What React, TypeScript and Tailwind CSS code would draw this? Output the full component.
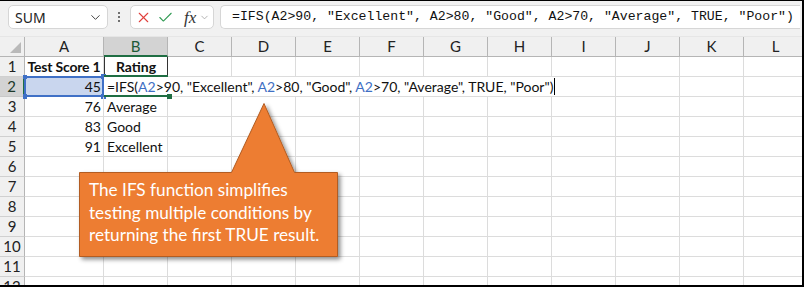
import { ChevronDown, X, Check } from 'lucide-react';

const cols = ['A', 'B', 'C', 'D', 'E', 'F', 'G', 'H', 'I', 'J', 'K', 'L'];
const widths = [79, 64, 64, 64, 64, 64, 64, 64, 64, 64, 64, 64];

const cellFont = { fontFamily: 'Lato, "Liberation Sans", sans-serif' };

function FormulaText() {
  return (
    <span>
      =IFS(<span className="text-[#3f6fc4]">A2</span>&gt;90, "Excellent", <span className="text-[#3f6fc4]">A2</span>&gt;80, "Good",{' '}
      <span className="text-[#3f6fc4]">A2</span>&gt;70, "Average", TRUE, "Poor")
    </span>
  );
}

function Cell({ row, col }: { row: number; col: number }) {
  const w = widths[col];
  const base =
    'relative h-[20px] shrink-0 whitespace-nowrap border-r border-b border-[#dcdcdc] text-[14px] leading-[19px] text-[#111]';

  // A column values
  if (col === 0) {
    const vals: Record<number, string> = { 2: '45', 3: '76', 4: '83', 5: '91' };
    if (row === 1)
      return (
        <div className={`${base} text-center font-bold tracking-[-0.2px]`} style={{ width: w }}>
          Test Score 1
        </div>
      );
    if (row === 2)
      return (
        <div className={`${base} bg-[#c9d6ee] text-right pr-[2px]`} style={{ width: w }}>
          45
          <div className="pointer-events-none absolute inset-[-1px] border-2 border-[#3f70c6]" />
          <div className="absolute -left-[2px] -top-[2px] h-[4px] w-[4px] bg-[#3f70c6]" />
          <div className="absolute -right-[3px] -top-[3px] h-[5px] w-[5px] bg-[#3f70c6]" />
          <div className="absolute -left-[2px] -bottom-[3px] h-[5px] w-[4px] bg-[#3f70c6]" />
          <div className="absolute -right-[3px] -bottom-[3px] h-[5px] w-[5px] bg-[#3f70c6]" />
        </div>
      );
    return (
      <div className={`${base} text-right pr-[2px]`} style={{ width: w }}>
        {vals[row] ?? ''}
      </div>
    );
  }

  if (col === 1) {
    const vals: Record<number, string> = { 3: 'Average', 4: 'Good', 5: 'Excellent' };
    if (row === 1)
      return (
        <div className={`${base} border-x border-x-[#333] text-center font-bold`} style={{ width: w }}>
          Rating
        </div>
      );
    if (row === 2)
      return (
        <div className={`${base} z-10`} style={{ width: w }}>
          <div className="absolute left-0 top-0 flex h-[19px] items-center whitespace-nowrap bg-white pl-[3px] pr-[1px]">
            <FormulaText />
            <span className="ml-[1px] inline-block h-[17px] w-[1px] bg-black" />
          </div>
          <div className="absolute -top-[2px] left-0 h-[2px] w-[64px] bg-[#1f6e43]" />
          <div className="absolute -bottom-[1px] left-0 h-[2px] w-[64px] bg-[#1f6e43]" />
          <div className="absolute -bottom-[3px] left-[63px] h-[5px] w-[5px] bg-[#1f6e43]" />
        </div>
      );
    return (
      <div className={`${base} pl-[3px]`} style={{ width: w }}>
        {vals[row] ?? ''}
      </div>
    );
  }

  return <div className={base} style={{ width: w }} />;
}

export default function App() {
  const rows = Array.from({ length: 12 }, (_, i) => i + 1);

  return (
    <div className="relative h-[287px] w-[804px] overflow-hidden border-t border-r-2 border-b-2 border-black bg-white">
      {/* Formula bar */}
      <div
        className="flex h-[35px] items-start gap-0 bg-[#f1f1f1] pl-[8px] pt-[4px]"
        style={{ fontFamily: '"Noto Sans", "Open Sans", sans-serif' }}
      >
        <div className="flex h-[24px] w-[100px] items-center justify-between rounded-[5px] border border-[#d6d6d6] bg-white pl-[6px] pr-[4px] text-[14px] text-[#222]">
          <span>SUM</span>
          <ChevronDown size={15} strokeWidth={1.6} className="text-[#444]" />
        </div>
        <div className="flex h-[24px] w-[22px] flex-col items-center justify-center gap-[2px]">
          <span className="h-[2px] w-[2px] rounded-full bg-[#444]" />
          <span className="h-[2px] w-[2px] rounded-full bg-[#444]" />
          <span className="h-[2px] w-[2px] rounded-full bg-[#444]" />
        </div>
        <div className="flex h-[24px] w-[84px] items-center rounded-[5px] border border-[#d6d6d6] bg-white pl-[4px]">
          <X size={17} strokeWidth={1.5} className="text-[#e0403c]" />
          <Check size={17} strokeWidth={1.5} className="ml-[5px] text-[#2f9a52]" />
          <span
            className="ml-[10px] text-[17px] italic leading-none text-[#333]"
            style={{ fontFamily: '"Liberation Serif", "DejaVu Serif", serif' }}
          >
            fx
          </span>
          <ChevronDown size={11} strokeWidth={1.6} className="ml-[3px] text-[#999]" />
        </div>
        <div
          className="ml-[6px] flex h-[24px] w-[580px] items-center rounded-l-[5px] border border-r-0 border-[#d6d6d6] bg-white pl-[11px] text-[13.2px] text-[#111]"
          style={{ fontFamily: '"Liberation Mono", "DejaVu Sans Mono", monospace' }}
        >
          =IFS(A2&gt;90, "Excellent", A2&gt;80, "Good", A2&gt;70, "Average", TRUE, "Poor")
        </div>
      </div>

      {/* Grid */}
      <div className="border-t border-[#e6e6e6]" style={cellFont}>
        <div className="flex h-[20px] bg-[#f0f0f0]">
          <div className="relative h-[20px] w-[25px] shrink-0 border-r border-b border-[#b5b5b5]">
            <div className="absolute bottom-[3px] right-[3px] h-0 w-0 border-b-[11px] border-l-[11px] border-b-[#b9b9b9] border-l-transparent" />
          </div>
          {cols.map((c, i) =>
            c === 'B' ? (
              <div
                key={c}
                className="flex h-[20px] shrink-0 items-center justify-center border-r border-b-2 border-r-[#b5b5b5] border-b-[#1f6e43] bg-[#d3d3d3] text-[15px] text-[#1d5a36]"
                style={{ width: widths[i] }}
              >
                {c}
              </div>
            ) : (
              <div
                key={c}
                className="flex h-[20px] shrink-0 items-center justify-center border-r border-b border-[#b5b5b5] text-[15px] text-[#222]"
                style={{ width: widths[i] }}
              >
                {c}
              </div>
            ),
          )}
        </div>
        {rows.map((r) => (
          <div key={r} className="flex">
            <div
              className={`flex h-[20px] w-[25px] shrink-0 items-center justify-center border-b text-[15px] ${
                r === 2
                  ? 'border-r-2 border-r-[#1f6e43] border-b-[#c8c8c8] bg-[#d3d3d3] text-[#1d3a2a]'
                  : 'border-r border-r-[#b5b5b5] border-b-[#d0d0d0] bg-[#f0f0f0] text-[#222]'
              }`}
            >
              {r}
            </div>
            {cols.map((c, i) => (
              <Cell key={c} row={r} col={i} />
            ))}
          </div>
        ))}
      </div>

      {/* Callout */}
      <div className="absolute left-[79px] top-[102px] h-[158px] w-[264px]">
        <svg width="264" height="158" className="absolute left-0 top-0 overflow-visible">
          <defs>
            <filter id="sh" x="-10%" y="-10%" width="130%" height="130%">
              <feDropShadow dx="2.5" dy="2.5" stdDeviation="2" floodColor="#000" floodOpacity="0.45" />
            </filter>
          </defs>
          <path
            d="M0.5 69.5 H152.5 L185 0.5 L215.5 69.5 H258.5 V153.5 H0.5 Z"
            fill="#ed7d31"
            stroke="#b25c22"
            strokeWidth="1"
            filter="url(#sh)"
          />
        </svg>
        <div
          className="absolute left-[10px] top-[76px] whitespace-nowrap text-[17.2px] leading-[22.5px] text-white"
          style={{ fontFamily: 'Lato, "Liberation Sans", sans-serif' }}
        >
          The IFS function simplifies
          <br />
          testing multiple conditions by
          <br />
          returning the first TRUE result.
        </div>
      </div>
    </div>
  );
}
